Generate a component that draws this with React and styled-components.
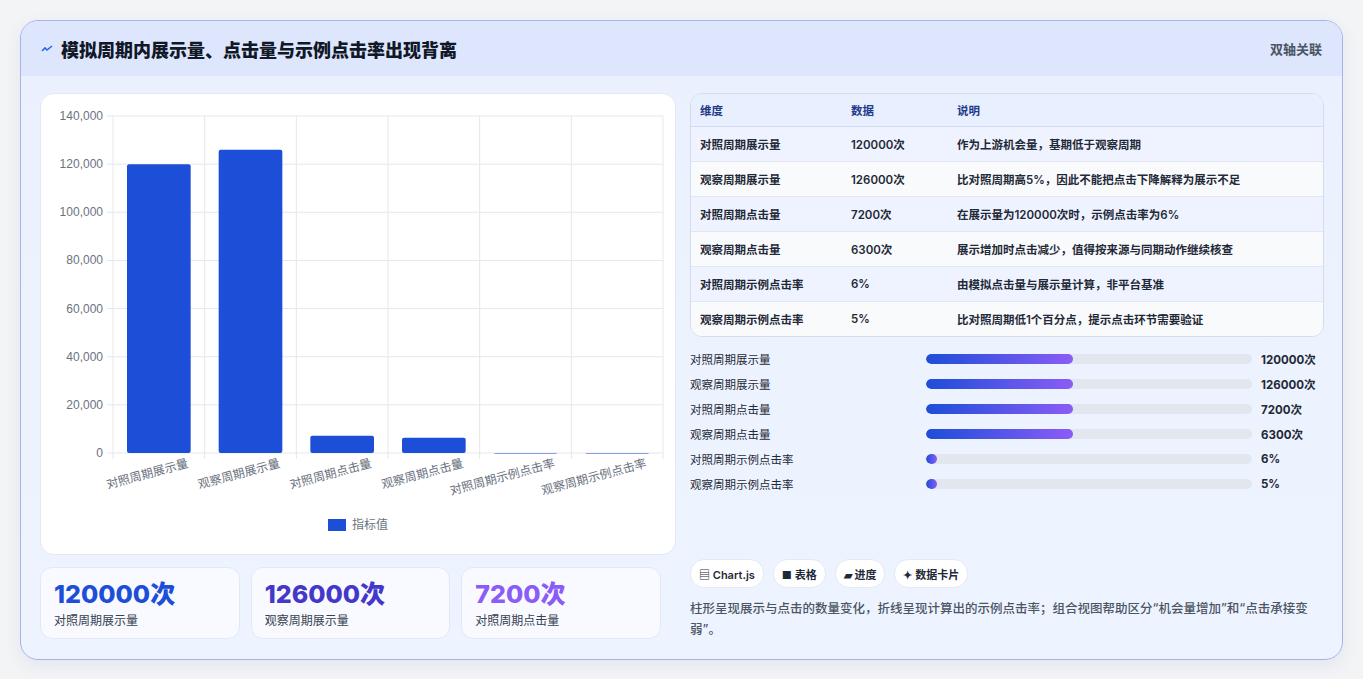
import React from 'react';
import styled, { createGlobalStyle } from 'styled-components';

const Global = createGlobalStyle`
  body { margin: 0; background: #f3f4f6; font-family: Inter, "Noto Sans CJK SC", sans-serif; }
`;

const Page = styled.div`
  padding: 20px 20px 22px 20px;
  width: 1323px;
`;

const Card = styled.div`
  border: 1px solid #a5b4e8;
  border-radius: 18px;
  background: linear-gradient(180deg, #eaf0fd 0%, #eef4ff 100%);
  overflow: hidden;
  box-shadow: 0 6px 18px rgba(30, 60, 140, 0.08);
`;

const Header = styled.div`
  height: 55px;
  background: #dde6fd;
  display: flex;
  align-items: center;
  justify-content: space-between;
  padding: 0 20px;
`;

const Title = styled.h1`
  margin: 0;
  font-size: 18px;
  font-weight: 800;
  color: #111827;
  display: flex;
  align-items: center;
  gap: 8px;
`;

const Tag = styled.span`
  font-size: 13px;
  color: #4b5563;
  font-weight: 600;
`;

const Body = styled.div`
  display: grid;
  grid-template-columns: 636px 634px;
  gap: 14px;
  padding: 17px 19px 19px 19px;
`;

const Col = styled.div`
  display: flex;
  flex-direction: column;
`;

const ChartBox = styled.div`
  height: 460px;
  background: #fff;
  border: 1px solid #e3e8f4;
  border-radius: 14px;
`;

const Stats = styled.div`
  display: grid;
  grid-template-columns: repeat(3, 1fr);
  gap: 11px;
  margin-top: 12px;
  margin-right: 15px;
`;

const Stat = styled.div`
  height: 72px;
  box-sizing: border-box;
  background: #f8faff;
  border: 1px solid #e1e8f7;
  border-radius: 12px;
  padding: 11px 13px;
`;

const StatNum = styled.div`
  font-size: 25px;
  font-weight: 800;
  color: ${p => p.$c};
  line-height: 30px;
`;

const StatLabel = styled.div`
  font-size: 12px;
  color: #374151;
  margin-top: 2px;
`;

const Table = styled.table`
  width: 100%;
  border-collapse: separate;
  border-spacing: 0;
  border: 1px solid #d3dbee;
  border-radius: 12px;
  overflow: hidden;
  font-size: 11.5px;
  background: #f8fafc;
`;

const Th = styled.th`
  text-align: left;
  font-weight: 700;
  color: #1e3a8a;
  background: #e8efff;
  height: 32px;
  padding: 0 9px;
  border-bottom: 1px solid #d3dbee;
`;

const Td = styled.td`
  height: 34px;
  padding: 0 9px;
  color: #1f2937;
  font-weight: ${p => (p.$b ? 600 : 400)};
  border-bottom: ${p => (p.$last ? 'none' : '1px solid #e1e7f2')};
  background: ${p => (p.$odd ? '#eef3ff' : '#f8fafc')};
`;

const Bars = styled.div`
  margin-top: 13px;
  display: flex;
  flex-direction: column;
  gap: 7px;
`;

const BarRow = styled.div`
  display: grid;
  grid-template-columns: 236px 326px 1fr;
  gap: 0;
  align-items: center;
  height: 18px;
  font-size: 11.5px;
  color: #1f2937;
`;

const Track = styled.div`
  height: 10px;
  border-radius: 5px;
  background: #e2e6ef;
  overflow: hidden;
`;

const Fill = styled.div`
  height: 100%;
  border-radius: 5px;
  background: linear-gradient(90deg, #1d4ed8, #8b5cf6);
`;

const Val = styled.span`
  padding-left: 9px;
  font-weight: 700;
`;

const Chips = styled.div`
  display: flex;
  gap: 9px;
  margin-top: 66px;
`;

const Chip = styled.span`
  background: #fff;
  border: 1px solid #e5e9f2;
  border-radius: 14px;
  padding: 0 8px;
  height: 27px;
  display: inline-flex;
  align-items: center;
  gap: 3px;
  font-size: 11px;
  font-weight: 600;
  color: #1f2937;
`;

const Note = styled.p`
  margin: 10px 0 0;
  font-size: 12.5px;
  line-height: 21px;
  color: #4b5563;
  font-weight: 500;
`;

const rows = [
  ['对照周期展示量', '120000次', '作为上游机会量，基期低于观察周期'],
  ['观察周期展示量', '126000次', '比对照周期高5%，因此不能把点击下降解释为展示不足'],
  ['对照周期点击量', '7200次', '在展示量为120000次时，示例点击率为6%'],
  ['观察周期点击量', '6300次', '展示增加时点击减少，值得按来源与同期动作继续核查'],
  ['对照周期示例点击率', '6%', '由模拟点击量与展示量计算，非平台基准'],
  ['观察周期示例点击率', '5%', '比对照周期低1个百分点，提示点击环节需要验证'],
];

const bars = [
  ['对照周期展示量', 120000, '120000次', 45],
  ['观察周期展示量', 126000, '126000次', 45],
  ['对照周期点击量', 7200, '7200次', 45],
  ['观察周期点击量', 6300, '6300次', 45],
  ['对照周期示例点击率', 6, '6%', 3.5],
  ['观察周期示例点击率', 5, '5%', 3.5],
];

function Chart() {
  const W = 636, top = 22, bottom = 359, left = 72, right = 622;
  const ticks = [0, 20000, 40000, 60000, 80000, 100000, 120000, 140000];
  const y = v => bottom - (v / 140000) * (bottom - top);
  const step = (right - left) / 6;
  return (
    <svg width={W} height={460} style={{ display: 'block' }}>
      {ticks.map(t => (
        <g key={t}>
          <line x1={left - 6} x2={right} y1={y(t)} y2={y(t)} stroke="#e5e7eb" />
          <text x={left - 10} y={y(t) + 4} textAnchor="end" fontSize="12" fill="#6b7280" fontFamily="Liberation Sans, sans-serif">
            {t.toLocaleString('en-US')}
          </text>
        </g>
      ))}
      {Array.from({ length: 7 }).map((_, i) => (
        <line key={i} x1={left + i * step} x2={left + i * step} y1={top} y2={bottom + 6} stroke="#e5e7eb" />
      ))}
      {bars.map((b, i) => {
        const x = left + i * step + 14;
        const h = bottom - y(b[1]);
        return (
          <g key={i}>
            <rect x={x} y={y(b[1])} width={step - 28} height={Math.max(h, 0.5)} fill="#1d4ed8" rx="2" />
            <text
              transform={`translate(${left + i * step + step / 2 + 30},${bottom + 14}) rotate(-15)`}
              textAnchor="end" fontSize="12" fill="#6b7280" fontFamily="Noto Sans CJK SC, sans-serif"
            >
              {b[0]}
            </text>
          </g>
        );
      })}
      <rect x="287" y="425" width="18" height="12" fill="#1d4ed8" />
      <text x="311" y="435" fontSize="12" fill="#6b7280" fontFamily="Noto Sans CJK SC, sans-serif">指标值</text>
    </svg>
  );
}

export default function App() {
  return (
    <Page>
      <Global />
      <Card>
        <Header>
          <Title>
            <svg width="12" height="12" viewBox="0 0 12 12"><path d="M1 8 L4 5 L6 7 L11 3" stroke="#2563eb" strokeWidth="1.6" fill="none" /></svg>
            模拟周期内展示量、点击量与示例点击率出现背离
          </Title>
          <Tag>双轴关联</Tag>
        </Header>
        <Body>
          <Col>
            <ChartBox><Chart /></ChartBox>
            <Stats>
              <Stat><StatNum $c="#1d4ed8">120000次</StatNum><StatLabel>对照周期展示量</StatLabel></Stat>
              <Stat><StatNum $c="#4338ca">126000次</StatNum><StatLabel>观察周期展示量</StatLabel></Stat>
              <Stat><StatNum $c="#8b5cf6">7200次</StatNum><StatLabel>对照周期点击量</StatLabel></Stat>
            </Stats>
          </Col>
          <Col>
            <Table>
              <thead>
                <tr><Th style={{ width: 133 }}>维度</Th><Th style={{ width: 88 }}>数据</Th><Th>说明</Th></tr>
              </thead>
              <tbody>
                {rows.map((r, i) => (
                  <tr key={i}>
                    <Td $b $odd={i % 2 === 0} $last={i === rows.length - 1}>{r[0]}</Td>
                    <Td $b $odd={i % 2 === 0} $last={i === rows.length - 1}>{r[1]}</Td>
                    <Td $b $odd={i % 2 === 0} $last={i === rows.length - 1}>{r[2]}</Td>
                  </tr>
                ))}
              </tbody>
            </Table>
            <Bars>
              {bars.map((b, i) => (
                <BarRow key={i}>
                  <span>{b[0]}</span>
                  <Track><Fill style={{ width: `${b[3]}%` }} /></Track>
                  <Val>{b[2]}</Val>
                </BarRow>
              ))}
            </Bars>
            <Chips>
              <Chip>▤ Chart.js</Chip>
              <Chip>■ 表格</Chip>
              <Chip>▰ 进度</Chip>
              <Chip>✦ 数据卡片</Chip>
            </Chips>
            <Note>柱形呈现展示与点击的数量变化，折线呈现计算出的示例点击率；组合视图帮助区分“机会量增加”和“点击承接变弱”。</Note>
          </Col>
        </Body>
      </Card>
    </Page>
  );
}
